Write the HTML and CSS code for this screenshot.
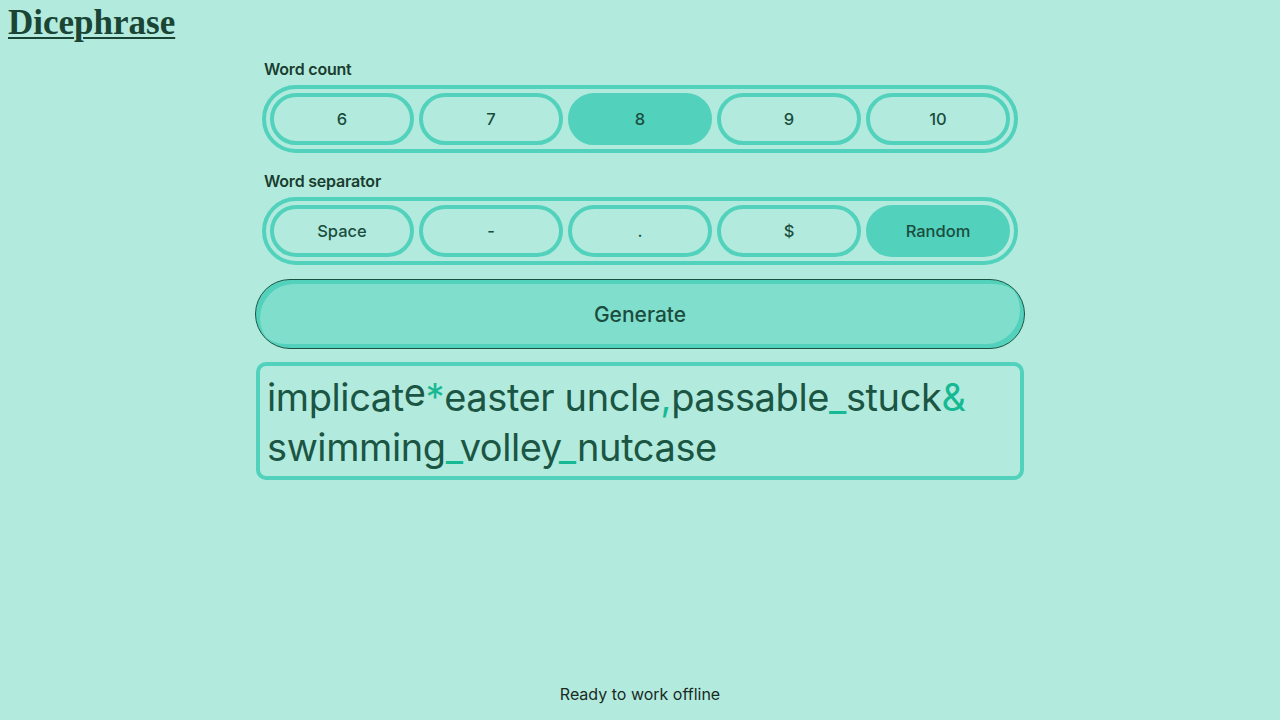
FILE: index.html
```html
<!DOCTYPE html>
<html lang="en">
<head>
<meta charset="utf-8">
<title>Dicephrase</title>
<link rel="stylesheet" href="styles.css">
</head>
<body>
<h1 class="title"><a href="#">Dicephrase</a></h1>
<main class="main">
  <section class="field">
    <div class="field-label">Word count</div>
    <div class="group">
      <button class="opt">6</button>
      <button class="opt">7</button>
      <button class="opt selected">8</button>
      <button class="opt">9</button>
      <button class="opt">10</button>
    </div>
  </section>
  <section class="field field-sep">
    <div class="field-label">Word separator</div>
    <div class="group">
      <button class="opt">Space</button>
      <button class="opt">-</button>
      <button class="opt">.</button>
      <button class="opt">$</button>
      <button class="opt selected">Random</button>
    </div>
  </section>
  <button class="generate">Generate</button>
  <div class="output">implicat<span class="raised">e</span><span class="sep">*</span>easter uncle<span class="sep">,</span>passable<span class="sep">_</span>stuck<span class="sep">&amp;</span> swimming<span class="sep">_</span>volley<span class="sep">_</span>nutcase</div>
</main>
<footer class="status">Ready to work offline</footer>
</body>
</html>
```
FILE: styles.css
```css
html, body {
  height: 100%;
}
body {
  margin: 0;
  padding: 8px 8px 0;
  box-sizing: border-box;
  background: #b2ebdd;
  color: #1b4d3e;
  font-family: Inter, "Noto Sans", sans-serif;
  display: flex;
  flex-direction: column;
  min-height: 100vh;
}
.title {
  margin: 0;
  font-family: "Liberation Serif", "Times New Roman", serif;
  font-size: 35px;
  font-weight: 700;
  line-height: 30px;
}
.title a {
  color: #1a4535;
  text-decoration: underline;
  text-decoration-thickness: 2px;
  text-underline-offset: 3px;
}
.main {
  width: 768px;
  margin: 20px auto 0;
  display: flex;
  flex-direction: column;
}
.field {
  margin: 0 6px;
  display: flex;
  flex-direction: column;
}
.field-sep {
  margin-top: 17px;
}
.field-label {
  font-size: 16px;
  font-weight: 600;
  line-height: 22px;
  padding-left: 2px;
  margin-bottom: 5px;
  color: #1a3d30;
  letter-spacing: -0.2px;
}
.group {
  border: 4px solid #52d1bc;
  border-radius: 34px;
  padding: 4px;
  display: flex;
  gap: 5px;
}
.opt {
  flex: 1;
  height: 52px;
  border: 4px solid #52d1bc;
  border-radius: 26px;
  background: transparent;
  font-family: Inter, "Noto Sans", sans-serif;
  font-size: 16.5px;
  font-weight: 500;
  color: #1b4d3e;
  padding: 0;
}
.opt.selected {
  background: #52d1bc;
}
.generate {
  margin: 14px -1px 0;
  height: 70px;
  border: 1.5px solid #17533f;
  border-radius: 35px;
  background: #80dfcc;
  box-shadow: inset 4px 4px 0 #52d1bc, inset -4px -4px 0 #52d1bc;
  font-family: Inter, "Noto Sans", sans-serif;
  font-size: 21px;
  font-weight: 500;
  color: #1b4d3e;
}
.output {
  margin-top: 13px;
  border: 4px solid #52d1bc;
  border-radius: 10px;
  padding: 6px 7px 4px;
  font-size: 38px;
  line-height: 50px;
  color: #1b5544;
  letter-spacing: -0.4px;
}
.raised {
  display: inline-block;
  transform: translateY(-5px);
}
.sep {
  color: #17b894;
}
.status {
  margin-top: auto;
  text-align: center;
  font-size: 16px;
  line-height: 20px;
  padding-bottom: 16px;
  color: #1a2a25;
}
```
